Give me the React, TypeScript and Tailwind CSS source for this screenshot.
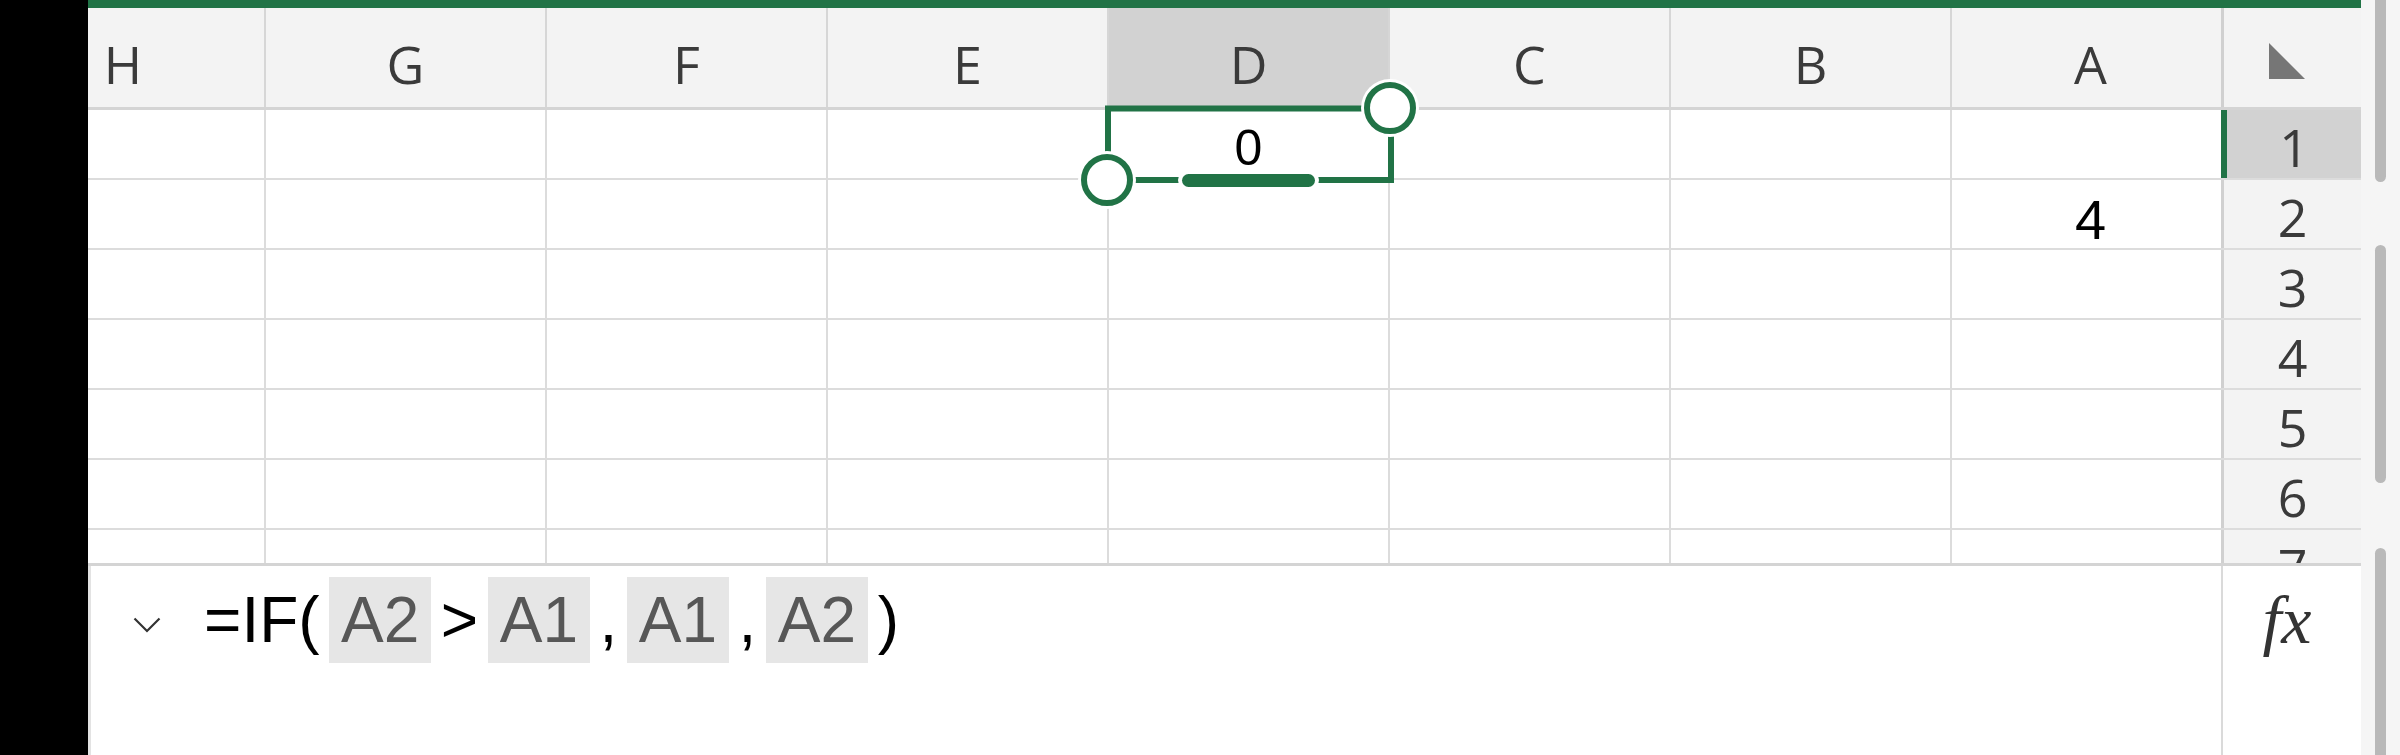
import React from "react";

// 열 헤더 정의 (오른쪽에서 왼쪽으로 A..H 배치된 시트)
const columns = [
  { label: "H", cls: "w-[284px] -ml-[106px] border-r-2", head: "" },
  { label: "G", cls: "w-[281px] border-r-2", head: "" },
  { label: "F", cls: "w-[281px] border-r-2", head: "" },
  { label: "E", cls: "w-[281px] border-r-2", head: "" },
  { label: "D", cls: "w-[281px] border-r-2", head: "bg-[#d2d2d2]" },
  { label: "C", cls: "w-[281px] border-r-2", head: "" },
  { label: "B", cls: "w-[281px] border-r-2", head: "" },
  { label: "A", cls: "w-[269px] pl-[8px]", head: "" },
];

const rows = [1, 2, 3, 4, 5, 6, 7];

const cellValue = (row: number, col: string) => {
  if (row === 1 && col === "D") return <span className="pb-[5px] text-[50px]">0</span>;
  if (row === 2 && col === "A") return <span className="text-[56px]">4</span>;
  return null;
};

const SelectionOverlay = () => (
  <svg
    className="absolute left-[1060px] top-[60px] pointer-events-none"
    width="380"
    height="170"
    viewBox="1060 60 380 170"
  >
    <path d="M1108 108.5 H1391 V180 H1108 Z" fill="none" stroke="#217346" strokeWidth="6" />
    <rect x="1178" y="170.5" width="141" height="19" rx="9.5" fill="#fff" />
    <rect x="1182" y="174" width="133" height="13" rx="6.5" fill="#217346" />
    <circle cx="1107" cy="180" r="29" fill="#fff" />
    <circle cx="1107" cy="180" r="23" fill="#fff" stroke="#217346" strokeWidth="6" />
    <circle cx="1390" cy="108" r="29" fill="#fff" />
    <circle cx="1390" cy="108" r="23" fill="#fff" stroke="#217346" strokeWidth="6" />
  </svg>
);

const Chip = ({ children }: { children: React.ReactNode }) => (
  <span className="mx-[9.5px] flex h-[86px] items-center bg-[#e6e6e6] px-[12px] text-[#575757]">{children}</span>
);

export default function App() {
  return (
    <div className="relative flex h-[755px] w-[2400px] overflow-hidden bg-white">
      {/* 왼쪽 검은 영역 */}
      <div className="w-[88px] shrink-0 bg-black" />

      <div className="flex w-[2273px] shrink-0 flex-col">
        <div className="h-[8px] bg-[#217346]" />

        {/* 열 헤더 */}
        <div className="flex h-[102px] border-b-[3px] border-[#d4d4d4] bg-[#f3f3f3] font-['Open_Sans',sans-serif] text-[52px] text-[#3a3a3a]">
          <div className="flex w-[2133px] overflow-hidden">
            {columns.map((c) => (
              <div
                key={c.label}
                className={`flex shrink-0 items-center justify-center border-[#d6d6d6] pt-[12px] leading-none ${c.cls} ${c.head}`}
              >
                {c.label}
              </div>
            ))}
          </div>
          <div className="flex w-[140px] items-center justify-center border-l-[3px] border-[#d0d0d0]">
            <svg width="36" height="36" viewBox="0 0 36 36" className="mt-[6px] -ml-[11px]">
              <polygon points="0,0 0,36 36,36" fill="#767676" />
            </svg>
          </div>
        </div>

        {/* 시트 본문 */}
        <div className="h-[456px] overflow-hidden border-b-[3px] border-[#d4d4d4]">
          {rows.map((r) => (
            <div key={r} className="flex h-[70px] shrink-0 border-b-2 border-[#dcdcdc]">
              <div className="flex w-[2133px] overflow-hidden font-['Liberation_Sans',Arial,sans-serif] leading-none text-black">
                {columns.map((c) => (
                  <div key={c.label} className={`flex shrink-0 items-end justify-center border-[#dcdcdc] ${c.cls}`}>
                    {cellValue(r, c.label)}
                  </div>
                ))}
              </div>
              <div
                className={`flex w-[140px] items-center justify-center pt-[6px] font-['Open_Sans',sans-serif] text-[52px] leading-none text-[#3a3a3a] ${
                  r === 1 ? "border-l-[6px] border-[#217346] bg-[#d2d2d2]" : "border-l-[3px] border-[#d0d0d0] bg-[#f3f3f3]"
                }`}
              >
                {r}
              </div>
            </div>
          ))}
        </div>

        {/* 수식 입력줄 */}
        <div className="flex h-[189px]">
          <div className="flex flex-1 items-start border-l-[3px] border-[#e3e3e3]">
            <svg width="28" height="16" viewBox="0 0 28 16" className="ml-[42px] mt-[51px] shrink-0">
              <polyline points="1.5,1.5 14,14 26.5,1.5" fill="none" stroke="#333" strokeWidth="2.2" />
            </svg>
            <div className="ml-[43px] mt-[11px] flex h-[86px] items-center font-['Liberation_Sans',Arial,sans-serif] text-[64px] leading-none text-black">
              <span>=IF(</span>
              <Chip>A2</Chip>
              <span>&gt;</span>
              <Chip>A1</Chip>
              <span>,</span>
              <Chip>A1</Chip>
              <span>,</span>
              <Chip>A2</Chip>
              <span>)</span>
            </div>
          </div>
          <div className="flex w-[140px] justify-center border-l-2 border-[#dadada] pr-[10px] pt-[20px] font-['Liberation_Serif',serif] text-[68px] italic leading-none text-[#333]">
            fx
          </div>
        </div>
      </div>

      {/* 스크롤바 영역 */}
      <div className="flex w-[39px] shrink-0 flex-col bg-[#f5f5f5] pl-[14px]">
        <div className="h-[182px] w-[11px] shrink-0 rounded-b-full bg-[#b9b9b9]" />
        <div className="mt-[63px] h-[238px] w-[11px] shrink-0 rounded-full bg-[#b9b9b9]" />
        <div className="mt-[65px] h-[220px] w-[11px] shrink-0 rounded-t-full bg-[#b9b9b9]" />
      </div>

      <SelectionOverlay />
    </div>
  );
}
